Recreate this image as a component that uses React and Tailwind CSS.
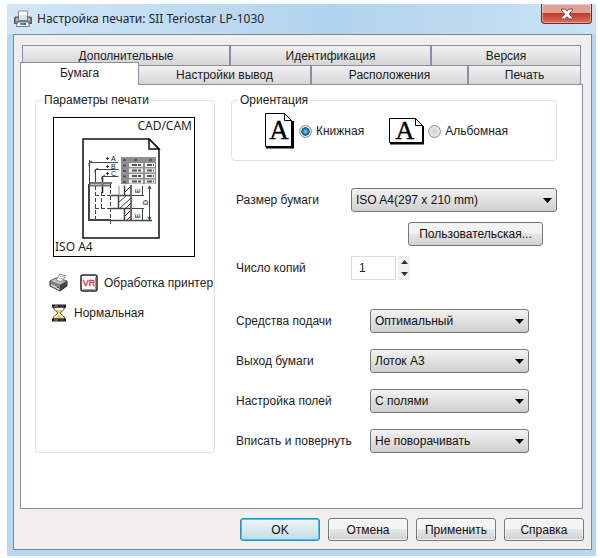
import React, { useState } from 'react';
import clsx from 'clsx';

const BACK_TABS = ['Дополнительные', 'Идентификация', 'Версия'];
const FRONT_TABS = ['Бумага', 'Настройки вывод', 'Расположения', 'Печать'];

const FEED_OPTIONS = [
  { id: 'source', label: 'Средства подачи', value: 'Оптимальный' },
  { id: 'output', label: 'Выход бумаги', value: 'Лоток А3' },
  { id: 'margins', label: 'Настройка полей', value: 'С полями' },
  { id: 'fit', label: 'Вписать и повернуть', value: 'Не поворачивать' },
];

const PrinterIcon = () => (
  <svg width="18" height="18" viewBox="0 0 18 18" aria-hidden="true">
    <path d="M4.5 1h9v7h-9z" fill="#fdfdfd" stroke="#8b8f94" />
    <path d="M.5 8q0-1 1-1h15q1 0 1 1v5.500H.5z" fill="#777b80" stroke="#54585c" />
    <path d="M2 8h2v3H2zM14 8h2v3h-2z" fill="#b4b8bb" />
    <path d="M5 5h8v5H5z" fill="#dfe1e3" />
    <path d="M3.500 12h11l1 4.500h-13z" fill="#fafafa" stroke="#72777c" />
    <path d="M6 13h4v2H6z" fill="#2b9aa5" />
    <path d="M10 13h2v2h-2z" fill="#3d5f8d" />
  </svg>
);

const CloseIcon = () => (
  <svg width="14" height="12" viewBox="0 0 14 12" aria-hidden="true">
    <path
      d="M1.5 1h3.7L7 3.2 8.8 1h3.7v1.2L9.4 6l3.1 3.8V11H8.8L7 8.8 5.2 11H1.5V9.8L4.6 6 1.5 2.2z"
      fill="#fff"
      stroke="#6b4a52"
    />
  </svg>
);

const OldPrinterIcon = () => (
  <svg width="19" height="19" viewBox="0 0 19 19" aria-hidden="true">
    <path d="M1 8l6-3 11 3v5l-7 5-10-5z" fill="#858585" stroke="#333" />
    <path d="M1 8l6-3 11 3-7 4z" fill="#c4c4c4" stroke="#777" />
    <path d="M7 7l4-6 6 2-5 6z" fill="#fff" stroke="#888" />
    <path d="M10 5l4 1M11 3l4 1" stroke="#bbb" />
    <path d="M11 12v6l7-5V8z" fill="#454545" />
    <path d="M2 11l8 4v2l-8-4z" fill="#cfcfcf" />
    <path d="M8 14h2v1H8z" fill="#c22" />
  </svg>
);

const VrIcon = () => (
  <svg width="18" height="18" viewBox="0 0 18 18" aria-hidden="true">
    <rect x="1" y="1" width="16" height="16" rx="2" fill="#fff" stroke="#2b2224" strokeWidth="1.5" />
    <path d="M3 15.500h12.500V3" fill="none" stroke="#999" />
    <text
      x="9"
      y="12"
      textAnchor="middle"
      fontSize="9"
      fontFamily="Liberation Sans, sans-serif"
      fill="#f01c2c"
      stroke="#f01c2c"
      strokeWidth=".3"
    >
      VR
    </text>
  </svg>
);

const HourglassIcon = () => (
  <svg width="16" height="18" viewBox="0 0 16 18" aria-hidden="true">
    <path d="M2.500 3c0 4 4 4 4 6s-4 2-4 6h11c0-4-4-4-4-6s4-2 4-6z" fill="#fff" stroke="#2a2430" />
    <path d="M4 6h8L8.500 9h-1zM8 10.500l4.500 4h-9z" fill="#ecd03a" />
    <path d="M1 .5h14v3H1zM1 14.500h14v3H1z" fill="#1d1824" />
    <path d="M3 2h4M3 16h4" stroke="#c9a227" />
    <path d="M9 2h4M9 16h4" stroke="#5c4b86" />
  </svg>
);

const PortraitIcon = () => (
  <svg width="29" height="36" viewBox="0 0 29 36" aria-hidden="true">
    <path d="M.5.5h19l7 7v26H.5z" fill="#fff" stroke="#000" />
    <path d="M19.500.5v7h7" fill="none" stroke="#000" />
    <path d="M1 34.500h27V8" fill="none" stroke="#000" strokeWidth="2" />
    <text x="14" y="26" textAnchor="middle" fontSize="27" fontFamily="Liberation Serif, serif" stroke="#000" strokeWidth=".4">
      A
    </text>
  </svg>
);

const LandscapeIcon = () => (
  <svg width="35" height="27" viewBox="0 0 35 27" aria-hidden="true">
    <path d="M.5.5h26l7 7v17H.5z" fill="#fff" stroke="#000" />
    <path d="M26.500.5v7h7" fill="none" stroke="#000" />
    <path d="M1 25.500h33V8" fill="none" stroke="#000" strokeWidth="2" />
    <text x="16" y="21" textAnchor="middle" fontSize="26" fontFamily="Liberation Serif, serif" stroke="#000" strokeWidth=".4">
      A
    </text>
  </svg>
);

// Sample drawing sheet shown in the preview
const SheetDrawing = () => (
  <svg width="79" height="101" viewBox="0 0 79 101" className="ml-7" aria-hidden="true">
    <path d="M1 1h66l10 10v89H1z" fill="#fff" stroke="#111" strokeWidth="1.5" />
    <path d="M67 1v10h10z" fill="#fff" stroke="#111" strokeWidth="1.5" />
    <g fill="none" stroke="#444">
      <path d="M7.500 46V22M7 24.500h29M13.500 44V31.500h23M20.500 38.500h16" />
      <path d="M20.500 55V38" stroke="#222" strokeWidth="1.5" />
      <path d="M10 23l-3 2v3M16 30l-3 2v3M23 37l-3 2v3" />
      <path d="M7 46v36h22" strokeWidth="2" />
      <path d="M28.500 46v42M13.500 48v34M19.500 54v16M13 57.500h15M13 70.500h15" strokeDasharray="4 2" />
      <path d="M28.500 57.500h14v-10M36.500 57v13M28.500 70.500h14v12M49 47v36M36 57.500h13M36 70.500h13" strokeWidth="1.5" />
      <path d="M28 82.500h42" strokeWidth="1.500" />
      <path d="M43 54l6-6M37 64l7-6M38 70l11-10M44 70l5-5M43 78l6-6M45 82l4-4" />
      <path d="M60.500 48v9M60.500 71v11M50 57.500h12M50 70.500h12M67.500 48v34" />
      <path d="M66 51l1.500-3 1.500 3M66 79l1.500 3 1.500-3" />
      <path d="M37 48v10" stroke="#888" />
    </g>
    <path d="M8 45h22M8 47.500h20" stroke="#777" strokeWidth="2" />
    <path d="M24 20.500h3M25.500 19v3M24 28.500h3M25.500 27v3M24 35.500h3M25.500 34v3" stroke="#333" />
    <g fontFamily="Liberation Sans, sans-serif" fontSize="7" fill="#111">
      <text x="29" y="23">A</text>
      <text x="29" y="31">B</text>
      <text x="29" y="38">C</text>
      <text x="-55" y="58" transform="rotate(-90)">E</text>
      <text x="-67" y="66" transform="rotate(-90)">D</text>
      <text x="-80" y="58" transform="rotate(-90)">E</text>
    </g>
    <path d="M39 19h35v27H39z" fill="#8f8f8f" />
    <path d="M41 22h3M52 22h3M67 22h3M41 27.500h3M41 33h3M41 38.500h3M41 44h3" stroke="#555" strokeWidth="2" />
    <g fill="#f1f1f1">
      <path d="M47 25h14v4H47zM47 30.500h14v4H47zM47 36h14v4H47zM47 41.500h14v4H47z" />
      <path d="M63 25h10v4H63zM63 30.500h10v4H63zM63 36h10v4H63zM63 41.500h10v4H63z" />
    </g>
    <path
      d="M50 27h9M50 32.500h9M50 38h9M50 43.500h9M65 27h7M65 32.500h7M65 38h7M65 43.500h7"
      stroke="#555"
      strokeWidth="2"
      strokeDasharray="5 1"
    />
  </svg>
);

const Tab = ({ label, active }) => (
  <button
    type="button"
    role="tab"
    aria-selected={active}
    className={clsx(
      'border-[#8c8f9b] text-center text-[#1c1c1c]',
      active
        ? 'relative -mt-[3px] -mb-px border-x border-t bg-white pb-[3px]'
        : 'border-t border-r-2 bg-linear-to-b from-[#f3f2f2] to-[#d6d6d6] last:border-r',
    )}
  >
    {label}
  </button>
);

const Select = ({ id, value, className }) => (
  <div className={clsx('relative', className)}>
    <select
      id={id}
      className="block h-6 w-full appearance-none rounded-[3px] border border-[#777] bg-linear-to-b from-[#f2f2f2] to-[#cfcfcf] pl-1 pr-6 text-[#111]"
    >
      <option>{value}</option>
    </select>
    <svg width="9" height="5" viewBox="0 0 9 5" className="pointer-events-none absolute right-[5px] top-[10px]" aria-hidden="true">
      <path d="M0 0h9L4.500 5z" fill="#000" />
    </svg>
  </div>
);

const Radio = ({ label, checked, onChange }) => (
  <label className="flex items-center gap-1">
    <input
      type="radio"
      name="orientation"
      checked={checked}
      onChange={onChange}
      className="size-[13px] appearance-none rounded-full border border-[#8e8f8f] bg-radial from-[#d0d2d4] to-[#f4f4f4] ring-1 ring-[#e4e4e4] ring-inset checked:bg-radial checked:from-[#5cc8f0] checked:from-10% checked:via-[#12507c] checked:via-50% checked:to-[#e6eaec] checked:to-60%"
    />
    {label}
  </label>
);

const Group = ({ title, className, children }) => (
  <fieldset className={clsx('min-w-0 rounded-[4px] border border-[#d8e2ea]', className)}>
    <legend className="ml-[6px] px-[2px] leading-4">{title}</legend>
    {children}
  </fieldset>
);

const DialogButton = ({ children, primary }) => (
  <button
    type="button"
    className={clsx(
      'h-[23px] w-20 rounded-[3px] border text-[#111]',
      primary
        ? 'border-[#2c8fb8] bg-linear-to-b from-[#eef5f7] to-[#c3dbe4] ring-1 ring-[#45c4ee] ring-inset'
        : 'border-[#777] bg-linear-to-b from-[#f4f4f4] from-45% via-[#e6e6e6] via-50% to-[#d0d0d0] ring-1 ring-white/70 ring-inset',
    )}
  >
    {children}
  </button>
);

const App = () => {
  const [orientation, setOrientation] = useState('portrait');
  const [copies, setCopies] = useState('1');

  return (
    <div className="bg-white pt-1 pr-1 pb-px pl-[7px] font-['Liberation_Sans',Arial,sans-serif] text-[12px] leading-4 text-[#222]">
      <main className="bg-[#b9d7f0] pr-1 pb-[6px] pl-[6px]">
        <header className="-mr-1 -ml-[6px] flex h-[30px] justify-between bg-linear-to-r from-[#d3e6f6] via-[#b1d3ee] via-55% to-[#cbe1f4] pr-1 pl-[7px]">
          <div className="flex items-center gap-[5px]">
            <PrinterIcon />
            <h1 className="font-['Noto_Sans','Open_Sans',sans-serif] text-[12px] text-[#1c2733]">
              Настройка печати: SII Teriostar LP-1030
            </h1>
          </div>
          <button
            type="button"
            aria-label="Закрыть"
            className="flex h-5 w-[51px] items-center justify-center rounded-b-[4px] border border-t-0 border-[#6e2a2a] bg-linear-to-b from-[#e0a196] from-45% via-[#c23a26] via-50% to-[#d9705a] ring-1 ring-white/40 ring-inset"
          >
            <CloseIcon />
          </button>
        </header>

        <div className="border border-[#7f8792] bg-[#f0eeee] pt-[10px] pr-2 pb-2 pl-[6px]">
          <div role="tablist" className="text-[12px]">
            <div className="mx-[2px] grid h-5 grid-cols-[208fr_201fr_149fr] border-l border-[#8c8f9b]">
              {BACK_TABS.map((tab) => (
                <Tab key={tab} label={tab} active={false} />
              ))}
            </div>
            <div className="mr-[2px] grid h-[19px] grid-cols-[119fr_173fr_157fr_112fr]">
              {FRONT_TABS.map((tab) => (
                <Tab key={tab} label={tab} active={tab === 'Бумага'} />
              ))}
            </div>
          </div>

          <section className="flex gap-4 border border-[#8c8f9b] bg-white pt-[7px] pr-[25px] pb-[55px] pl-[14px]">
            <Group title="Параметры печати" className="w-[180px] shrink-0">
              <div className="mt-[9px] ml-[17px] w-[142px] border border-black font-['Noto_Sans','Open_Sans',sans-serif] text-[12px]">
                <p className="pr-[2px] text-right">CAD/CAM</p>
                <div className="pt-1">
                  <SheetDrawing />
                </div>
                <p className="pb-px pl-px">ISO A4</p>
              </div>
              <div className="mt-4 ml-[13px] flex items-center gap-[6px] whitespace-nowrap">
                <span className="flex shrink-0 items-center gap-3">
                  <OldPrinterIcon />
                  <VrIcon />
                </span>
                Обработка принтер
              </div>
              <div className="mt-3 ml-[15px] flex items-center gap-[7px]">
                <HourglassIcon />
                Нормальная
              </div>
            </Group>

            <div className="min-w-0 flex-1">
              <Group title="Ориентация">
                <div className="flex items-center pt-[5px] pb-[11px] pl-[33px]">
                  <PortraitIcon />
                  <div className="mr-[25px] ml-[5px]">
                    <Radio
                      label="Книжная"
                      checked={orientation === 'portrait'}
                      onChange={() => setOrientation('portrait')}
                    />
                  </div>
                  <LandscapeIcon />
                  <div className="ml-1">
                    <Radio
                      label="Альбомная"
                      checked={orientation === 'landscape'}
                      onChange={() => setOrientation('landscape')}
                    />
                  </div>
                </div>
              </Group>

              <div className="mt-[27px] flex items-center pl-[5px]">
                <label htmlFor="paper" className="w-[115px]">Размер бумаги</label>
                <Select id="paper" value="ISO A4(297 x 210 mm)" className="flex-1" />
              </div>
              <div className="mt-[10px] mr-[14px] flex justify-end">
                <button
                  type="button"
                  className="h-6 w-[135px] rounded-[3px] border border-[#777] bg-linear-to-b from-[#f3f3f3] from-45% via-[#e6e6e6] via-50% to-[#d2d2d2] text-[#111]"
                >
                  Пользовательская...
                </button>
              </div>
              <div className="mt-[10px] flex items-center pl-[5px]">
                <label htmlFor="copies" className="w-[115px]">Число копий</label>
                <input
                  id="copies"
                  value={copies}
                  onChange={(e) => setCopies(e.target.value)}
                  className="h-6 w-[45px] border border-[#d9dde3] bg-white pl-[7px]"
                />
                <div className="ml-[2px] flex h-6 w-3 flex-col items-center justify-between bg-[#f1f1f3] py-1">
                  <button
                    type="button"
                    aria-label="Больше"
                    onClick={() => setCopies(String(Number(copies) + 1))}
                  >
                    <svg width="7" height="4" viewBox="0 0 7 4" className="block"><path d="M0 4h7L3.500 0z" fill="#333" /></svg>
                  </button>
                  <button
                    type="button"
                    aria-label="Меньше"
                    onClick={() => setCopies(String(Math.max(1, Number(copies) - 1)))}
                  >
                    <svg width="7" height="4" viewBox="0 0 7 4" className="block"><path d="M0 0h7L3.500 4z" fill="#333" /></svg>
                  </button>
                </div>
              </div>

              <div className="mt-[29px] mr-7 space-y-4 pl-[5px]">
                {FEED_OPTIONS.map((option) => (
                  <div key={option.id} className="flex items-center">
                    <label htmlFor={option.id} className="w-[134px]">{option.label}</label>
                    <Select id={option.id} value={option.value} className="flex-1" />
                  </div>
                ))}
              </div>
            </div>
          </section>

          <footer className="mt-[9px] -mr-px flex justify-end gap-2">
            <DialogButton primary>OK</DialogButton>
            <DialogButton>Отмена</DialogButton>
            <DialogButton>Применить</DialogButton>
            <DialogButton>Справка</DialogButton>
          </footer>
        </div>
      </main>
    </div>
  );
};

export default App;
